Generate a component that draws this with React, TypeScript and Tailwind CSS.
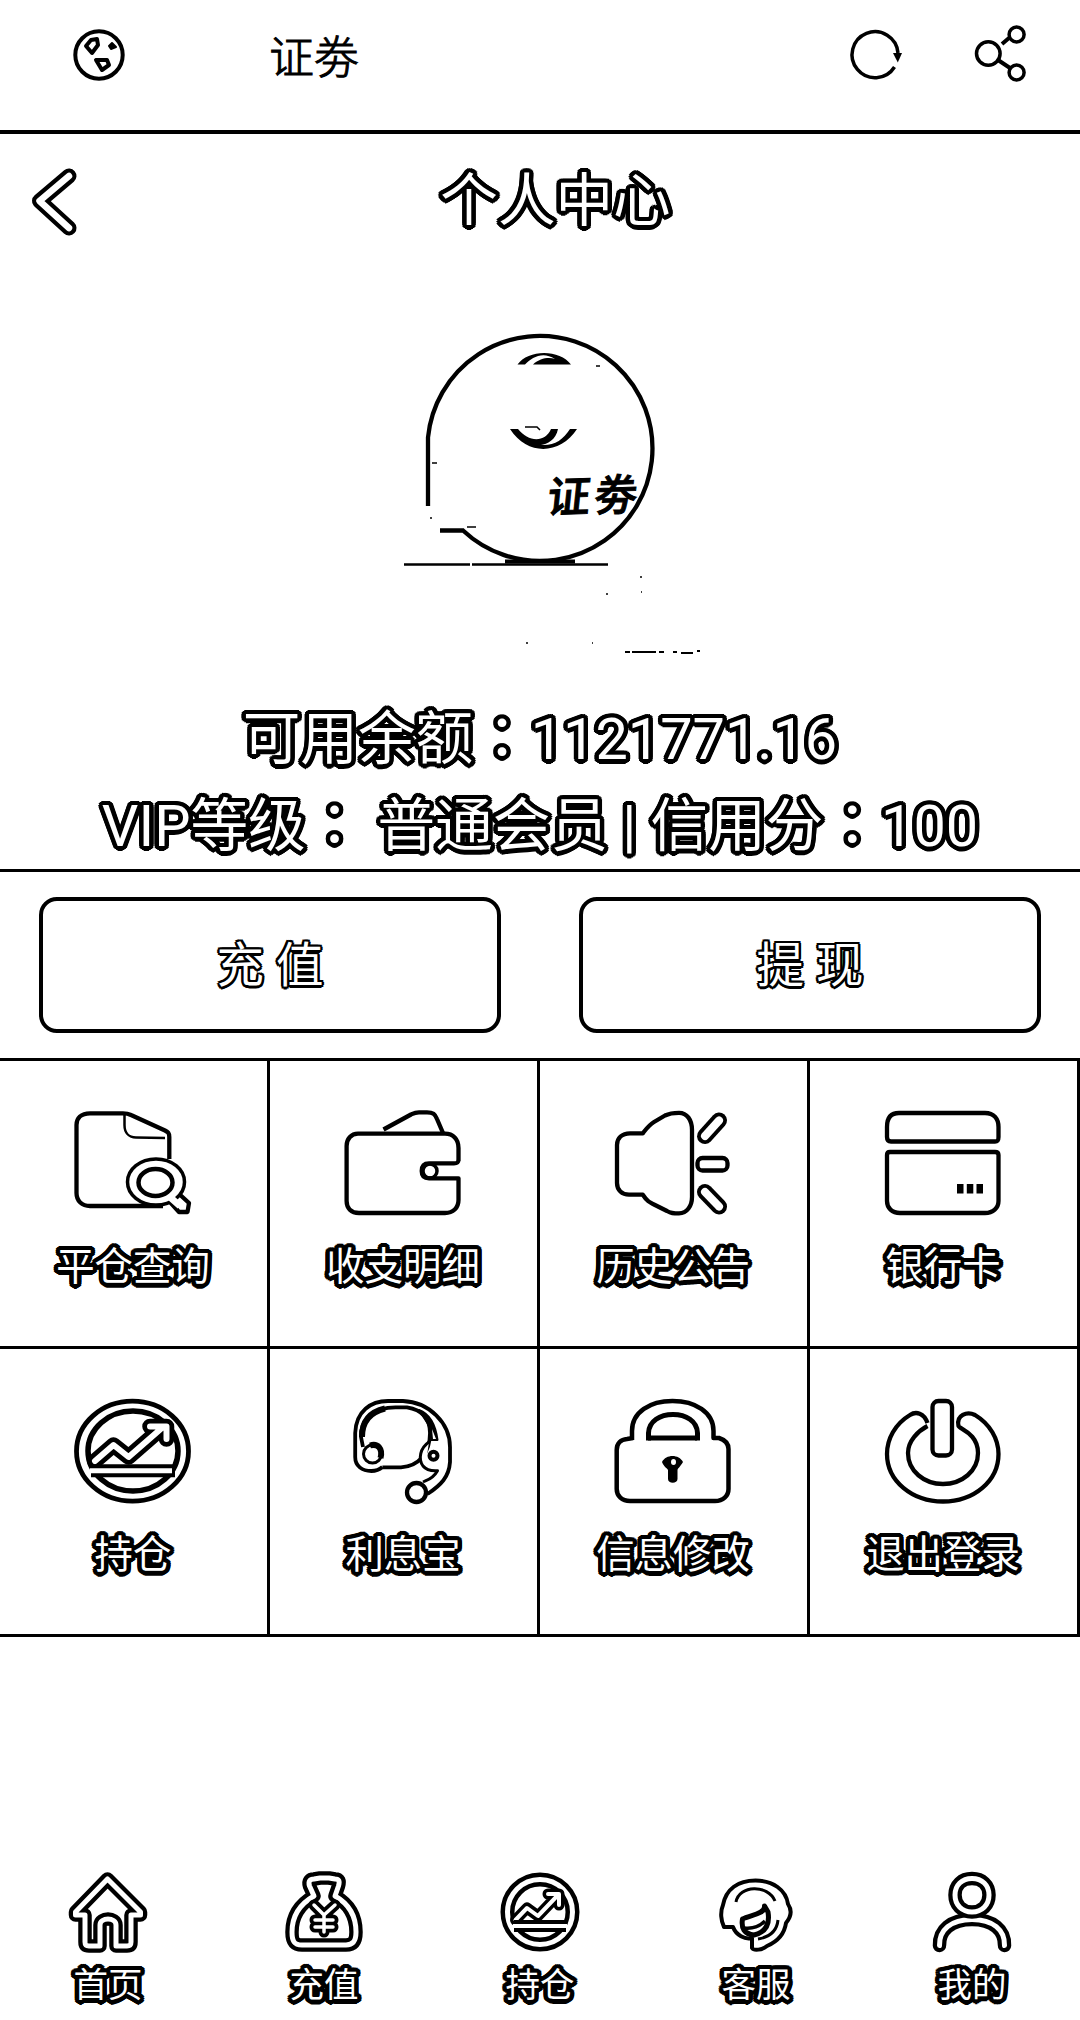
import type { ReactNode } from "react";

const outline =
  "text-white [text-shadow:4.5px_0_#000,4.2px_1.7px_#000,3.2px_3.2px_#000,1.7px_4.2px_#000,0_4.5px_#000,-1.7px_4.2px_#000,-3.2px_3.2px_#000,-4.2px_1.7px_#000,-4.5px_0_#000,-4.2px_-1.7px_#000,-3.2px_-3.2px_#000,-1.7px_-4.2px_#000,0_-4.5px_#000,1.7px_-4.2px_#000,3.2px_-3.2px_#000,4.2px_-1.7px_#000,2px_0_#000,-2px_0_#000,0_2px_#000,0_-2px_#000]";

const thinOutline =
  "text-white [text-shadow:2.5px_0_#000,1.8px_1.8px_#000,0_2.5px_#000,-1.8px_1.8px_#000,-2.5px_0_#000,-1.8px_-1.8px_#000,0_-2.5px_#000,1.8px_-1.8px_#000,1px_0_#000,-1px_0_#000,0_1px_#000,0_-1px_#000]";

/* A white line with a black contour on both sides. */
function Tube({ d, outer = 13.5, inner = 5 }: { d: string; outer?: number; inner?: number }) {
  return (
    <g fill="none" strokeLinejoin="round" strokeLinecap="round">
      <path d={d} stroke="#000" strokeWidth={outer} />
      <path d={d} stroke="#fff" strokeWidth={inner} />
    </g>
  );
}

function MenuIcon({ children }: { children: ReactNode }) {
  return (
    <svg
      viewBox="0 0 120 108"
      className="mr-[1px] h-[108px] w-[120px] shrink-0"
      fill="none"
      stroke="#000"
      strokeWidth={4.3}
      strokeLinejoin="round"
    >
      {children}
    </svg>
  );
}

function NavIcon({ children }: { children: ReactNode }) {
  return (
    <svg
      viewBox="0 0 80 80"
      className="mt-[1px] h-[80px] w-[80px] shrink-0 overflow-visible"
      fill="none"
      stroke="#000"
      strokeWidth={4}
      strokeLinejoin="round"
    >
      {children}
    </svg>
  );
}

const menu: { label: string; icon: ReactNode }[] = [
  {
    label: "平仓查询",
    icon: (
      <>
        <path d="M96.3 50V28C96.3 24 95 23 92 21.5L58 6C55 4.5 53 4.3 50 4.3H17C8 4.3 3.5 9 3.5 16V84C3.5 92 9 97 17 97H90" />
        <path d="M51.5 5V16C51.5 24 56 28.5 63 28.5L92 29" strokeWidth={2.5} />
        <path d="M97 93L106 103H114.5L116 94L104 83" fill="#fff" />
        <ellipse cx="83" cy="73" rx="28.5" ry="23" fill="#fff" strokeWidth={3.5} />
        <path d="M98 89L107 97" stroke="#fff" strokeWidth={7} />
        <ellipse cx="82.5" cy="73.5" rx="17" ry="13.5" strokeWidth={4.5} />
      </>
    ),
  },
  {
    label: "收支明细",
    icon: (
      <>
        <path d="M115.5 52V39C115.5 30 110 24.7 102 24.7H15C8 24.7 3.6 30 3.6 37V92C3.6 99 8 104 16 104H102C110 104 115.5 99 115.5 91V69.3H86C80 69.3 78.7 66 78.7 62C78.7 57 80 54.3 86 54.3H111C114 54.3 115.5 54 115.5 50" />
        <path d="M40.5 20.5L68 5.5C71 4 72 3.3 76 3.3H84C90 3.3 92 5 94 10L100 24" />
        <circle cx="87" cy="62" r="7" strokeWidth={3.5} />
      </>
    ),
  },
  {
    label: "历史公告",
    icon: (
      <>
        <path d="M29.8 24.3H17C9 24.3 4 29 4 36V74C4 81 9 85.7 16 85.7H29.8C34 92 36 93 42 96L54 102C58 104.3 60 104.3 66 104.3C74 104.3 79 97 79 88V21C79 11 74 3.8 66 3.8C60 3.8 57 4 52 6.5L41 13C36 16 34 19 29.8 24.3Z" />
        <rect x="84.5" y="49" width="30" height="12.5" rx="5" />
        <Tube d="M92 27L106 11.5" outer={16} inner={8} />
        <Tube d="M92 83L106 97.5" outer={16} inner={8} />
      </>
    ),
  },
  {
    label: "银行卡",
    icon: (
      <>
        <path d="M8 32.5C5 32.5 4 31 4 28V18C4 9 8 4 16 4H102C111 4 115.5 10 115.5 18V28C115.5 31 115 32.5 112 32.5Z" />
        <path d="M4 46C4 44 5 43 7 43H112C114.5 43 115.5 44 115.5 46V92C115.5 99 110 104 102 104H17C9 104 4 99 4 92Z" />
        <path d="M74 75h6.5v9.5h-6.5zM83.8 75h6.5v9.5h-6.5zM93.5 75h6.5v9.5h-6.5z" fill="#000" stroke="none" />
      </>
    ),
  },
  {
    label: "持仓",
    icon: (
      <>
        <ellipse cx="59.5" cy="54.2" rx="56" ry="50" strokeWidth={4.8} />
        <ellipse cx="60" cy="54" rx="45" ry="40" strokeWidth={5.5} />
        <Tube d="M22 64L40.5 48L55.6 60L90 30M77 29.5H93.5V42" outer={15.5} inner={6} />
        <path d="M18 73.7H102" strokeWidth={13} />
        <path d="M17 73.7H99" stroke="#fff" strokeWidth={5} />
      </>
    ),
  },
  {
    label: "利息宝",
    icon: (
      <>
        <path d="M39.4 70C36 73 33 74 28.4 74C19 74 12.2 69 12.2 60V36C13 14 28 4 45 4H60C86 5 107 26 107 50V65C106 80 98 88 84.5 97" strokeWidth={3.8} />
        <path d="M20 50L18 40C17 24 30 10.3 52.5 10.3H64C80 13 87 22 87 36C87 56 76 69 58 70.3H39.4" strokeWidth={3.8} />
        <path d="M19 40C19 24 27 15 42 11.5" strokeWidth={6} />
        <path d="M76 13C84 16 92 24 94.5 43H87V30Z" fill="#000" strokeWidth={2} />
        <path d="M89 32L93 42H90Z" fill="#fff" stroke="none" />
        <circle cx="29.5" cy="57" r="9" strokeWidth={3} />
        <path d="M27 48.5C35 46 40 52 37.5 61" strokeWidth={6} />
        <path d="M86 45C77 51 75 62 80 69C84 74 90 74 94.5 73.7C90 82 84 83 80 85" strokeWidth={3} fill="#fff" />
        <circle cx="90.5" cy="58.7" r="4" strokeWidth={4} />
        <circle cx="73.5" cy="95.5" r="9.5" fill="#fff" />
      </>
    ),
  },
  {
    label: "信息修改",
    icon: (
      <>
        <path d="M19 43V34C19 15 37 4 59.5 4C82 4 100.5 15 100.5 34V41H106C112 43 115.5 47 115.5 52V92C115.5 99 110 104 102 104H17C9 104 3.7 99 3.7 92V53C3.7 46 8 42.5 14 42L20 41" strokeWidth={4.5} />
        <path d="M35.5 43.5V36C36 24 47 17.5 60 17.5C73 17.5 84 24 84.5 36V43.5" strokeWidth={5} />
        <path d="M35 41H84" strokeWidth={5} />
        <path d="M49 65C53 57 66 57 70 65C67 70 65 71 64.5 73V82C64.5 87 55 87 55 82V73C54 71 51 70 49 65Z" fill="#000" stroke="none" />
        <ellipse cx="60.5" cy="65" rx="2.5" ry="3" fill="#fff" stroke="none" />
      </>
    ),
  },
  {
    label: "退出登录",
    icon: (
      <>
        <rect x="49.5" y="4" width="19.5" height="54.5" rx="6" />
        <path d="M44.5 26C41 16 33 14 27 18C12 27 4 42 4 57C4 84 29 104.5 60 104.5C91 104.5 115.5 84 115.5 57C115.5 42 107 27 92 18C84 14 73 18 75.5 29C76 32 95 36 95 56C95 74 79 87 60 87C41 87 25 74 25 56C25 44 35 34 44.5 29" />
      </>
    ),
  },
];

const nav: { label: string; icon: ReactNode }[] = [
  {
    label: "首页",
    icon: (
      <Tube d="M39.5 7L7.5 40V43H17V70C17 73 18 74 21 74H32V53C32 45 48 45 48 53V74H59C62 74 63 73 63 70V43H72.5V40Z" />
    ),
  },
  {
    label: "充值",
    icon: (
      <>
        <Tube d="M30 24L25.5 14C24 9 26 7 30 7L36 6H45L51 7C55 7 56 9 54.5 14L51 24C65 32 72 44 72 60C72 69 69 73 62 73H18C10 73 8 69 8 60C8 44 16 32 30 24Z" />
        <Tube d="M30 33L40 43L51 33M40 43V60M31 48H49M31 55H49" outer={11} inner={3.5} />
      </>
    ),
  },
  {
    label: "持仓",
    icon: (
      <>
        <circle cx="40" cy="40" r="32.5" strokeWidth={14} />
        <circle cx="40" cy="40" r="32.5" stroke="#fff" strokeWidth={5} />
        <Tube d="M15.5 48L27 36L38 44L58 23M48 22H59V33" outer={11} inner={4} />
        <path d="M14 54H66" strokeWidth={12} />
        <path d="M13 54H67" stroke="#fff" strokeWidth={4} />
      </>
    ),
  },
  {
    label: "客服",
    icon: (
      <>
        <path d="M7 33C10 17 22 8.5 39.5 8.5C57 8.5 70 18 72 32C76 38 75 45 70 51C68 65 58 71 51 74C46 78 38 79 36 76V66C29 68 20 63 17 55H8C5 49 4 40 7 33Z" />
        <path d="M20 30C23 13 52 12 59 29" strokeWidth={3} />
        <path d="M48.5 34C50 42 34 43 26.5 47C25 56 28 62 38 63C50 60 54 52 52 40Z" strokeWidth={5} />
        <path d="M28 56C36 57 43 55 49 49" strokeWidth={3.5} />
        <path d="M62 48C61 58 54 65 42 67" strokeWidth={3} />
      </>
    ),
  },
  {
    label: "我的",
    icon: (
      <>
        <Tube d="M7.5 73.5C7 58 19 47.5 40 47.5C61 47.5 73 58 72.5 73.5" />
        <Tube d="M40 6.5C50 6.5 57 13 57 23C57 33 50 40 40 40C30 40 23 33 23 23C23 13 30 6.5 40 6.5Z" />
      </>
    ),
  },
];

function Colon() {
  return <span className="font-['Noto_Sans_CJK_TC',sans-serif]">：</span>;
}

export default function App() {
  return (
    <div className="flex h-[2020px] w-[1080px] flex-col overflow-hidden bg-white font-[Roboto,'Noto_Sans_CJK_SC',sans-serif] text-black">
      <header className="flex h-[134px] shrink-0 items-start border-b-4 border-black pt-[15px]">
        <svg viewBox="0 0 60 80" className="ml-[69px] h-[80px] w-[60px]" fill="none" stroke="#000" strokeWidth={4} strokeLinejoin="round">
          <circle cx="30" cy="40" r="23.7" />
          <path d="M28 24L22 25L17 31L23 38L29 30Z" strokeWidth={4} />
          <path d="M27 45H38L40 50L33 55Z" strokeWidth={4} />
          <path d="M43 28L47 32L42 34L40 31Z" fill="#000" strokeWidth={2} />
        </svg>
        <h2 className="ml-[140px] mt-[11px] text-[45px] font-light leading-[66px] [-webkit-text-stroke:1px_black]">证劵</h2>
        <svg viewBox="0 0 200 80" className="ml-auto mr-[41px] h-[80px] w-[200px]" fill="none" stroke="#000" strokeWidth={3.5}>
          <path d="M55.5 52A23 23 0 1 1 59 38" />
          <path d="M54 38H63L58.8 47.5Z" fill="#000" stroke="none" />
          <path d="M163 29L170 23M159 45L171 53" strokeWidth={4} />
          <circle cx="149.3" cy="38.5" r="11.8" />
          <circle cx="177.6" cy="19.5" r="7.5" />
          <circle cx="177.6" cy="57.5" r="7.5" />
        </svg>
      </header>

      <div className="grid h-[132px] shrink-0 grid-cols-[1fr_auto_1fr] items-center">
        <svg viewBox="0 0 60 80" className="ml-[26px] h-[80px] w-[60px]" aria-label="返回">
          <Tube d="M43 16L13.5 41L43 68" outer={15} inner={6.5} />
        </svg>
        <h1 className={`pl-[31px] pt-[4px] text-[57.6px] leading-[80px] ${outline}`}>个人中心</h1>
      </div>

      <section className="flex h-[434px] shrink-0 justify-center pt-[44px]">
        <svg viewBox="380 310 320 360" className="h-[360px] w-[320px]" fill="none" stroke="#000">
          <path d="M440 530.5H463A112.5 112.5 0 1 0 428 437.4V506" strokeWidth="4.3" />
          <path d="M517.5 364.5C528 349 560 349 571 364.5H533C540 358 549 357 555 359C543 351 532 357 525 364.5Z" fill="#000" stroke="none" />
          <path d="M510 429H518C528 442 545 443 551 429H558C556 440 547 444 541 445C554 446 563 440 570 429H577C561 454 528 457 510 429Z" fill="#000" stroke="none" />
          <path d="M525 427H537L540 430M432 463H437M431 517V519M467 527H476M596 366H600" strokeWidth="1.5" />
          <path d="M404 564.5H470M472 564.5H608" strokeWidth="2.5" />
          <path d="M505 561.5H575" strokeWidth="4" />
          <path d="M625 652H630M632 652H656M659 652H664M673 652H677M681 653H693M697 651H704" strokeWidth="2" />
          <path d="M640 577H642M641 592H642M607 593V595M526 643H528M592 643H593" strokeWidth="1.5" />
          <text
            transform="translate(546 513) rotate(-2) skewX(-8)"
            fontFamily="'Noto Sans CJK SC', sans-serif"
            fontSize="43"
            fontWeight="500"
            letterSpacing="4"
            fill="#000"
            stroke="#000"
            strokeWidth="1"
          >
            证劵
          </text>
        </svg>
      </section>

      <section className={`flex h-[172px] shrink-0 flex-col items-center gap-[5px] whitespace-pre border-b-[3px] border-black text-[57.6px] leading-[76px] ${outline}`}>
        <p className="-mt-[4px]">可用余额<Colon />1121771.16</p>
        <p>VIP等级<Colon /> 普通会员 | 信用分<Colon />100</p>
      </section>

      <section className="flex h-[189px] shrink-0 gap-[78px] border-b-[3px] border-black px-[39px] pt-[25px]">
        {["充 值", "提 现"].map((t) => (
          <button
            key={t}
            className={`h-[136px] flex-1 rounded-[18px] border-4 border-black pt-[3px] text-[47.5px] leading-none ${thinOutline}`}
          >
            {t}
          </button>
        ))}
      </section>

      <section className="grid shrink-0 grid-cols-4">
        {menu.map(({ label, icon }) => (
          <div key={label} className="flex h-[288px] flex-col items-center border-b-[3px] border-r-[3px] border-black pt-[48px]">
            <MenuIcon>{icon}</MenuIcon>
            <span className={`mr-[1px] mt-[22px] text-[38.4px] leading-[56px] ${outline}`}>{label}</span>
          </div>
        ))}
      </section>

      <nav className="mt-auto grid h-[149px] shrink-0 grid-cols-5">
        {nav.map(({ label, icon }) => (
          <div key={label} className="flex flex-col items-center">
            <NavIcon>{icon}</NavIcon>
            <span className={`mt-[9px] text-[34.5px] leading-[48px] ${outline}`}>{label}</span>
          </div>
        ))}
      </nav>
    </div>
  );
}
